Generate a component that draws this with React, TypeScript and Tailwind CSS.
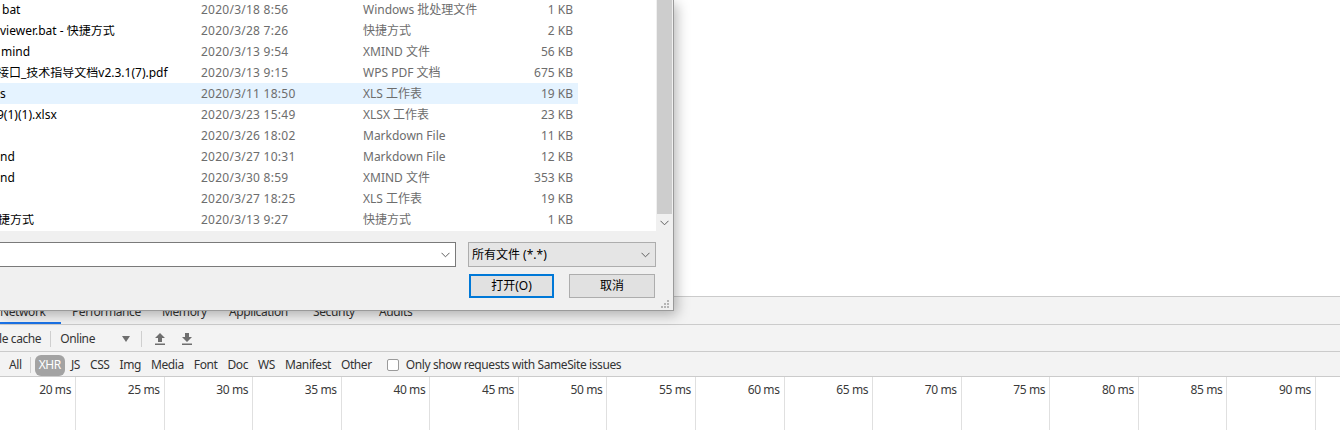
const FONT = "font-['Noto_Sans','Noto_Sans_CJK_SC',sans-serif]";

type FileRow = {
  name: string;
  off: string;
  date: string;
  type: string;
  size: string;
  selected?: boolean;
};

const FILES: FileRow[] = [
  { name: "bat", off: "ml-[2px]", date: "2020/3/18 8:56", type: "Windows 批处理文件", size: "1 KB" },
  { name: "viewer.bat - 快捷方式", off: "ml-0", date: "2020/3/28 7:26", type: "快捷方式", size: "2 KB" },
  { name: "mind", off: "ml-[1px]", date: "2020/3/13 9:54", type: "XMIND 文件", size: "56 KB" },
  { name: "接口_技术指导文档v2.3.1(7).pdf", off: "-ml-[3px]", date: "2020/3/13 9:15", type: "WPS PDF 文档", size: "675 KB" },
  { name: "s", off: "ml-0", date: "2020/3/11 18:50", type: "XLS 工作表", size: "19 KB", selected: true },
  { name: "9(1)(1).xlsx", off: "-ml-[3px]", date: "2020/3/23 15:49", type: "XLSX 工作表", size: "23 KB" },
  { name: "", off: "ml-0", date: "2020/3/26 18:02", type: "Markdown File", size: "11 KB" },
  { name: "nd", off: "ml-0", date: "2020/3/27 10:31", type: "Markdown File", size: "12 KB" },
  { name: "nd", off: "ml-0", date: "2020/3/30 8:59", type: "XMIND 文件", size: "353 KB" },
  { name: "", off: "ml-0", date: "2020/3/27 18:25", type: "XLS 工作表", size: "19 KB" },
  { name: "捷方式", off: "-ml-[2px]", date: "2020/3/13 9:27", type: "快捷方式", size: "1 KB" },
];

const TABS = [
  { label: "Network", w: "w-[72px] -ml-[11px]", active: true },
  { label: "Performance", w: "w-[90px]" },
  { label: "Memory", w: "w-[67px]" },
  { label: "Application", w: "w-[84px]" },
  { label: "Security", w: "w-[66px]" },
  { label: "Audits", w: "w-[60px]" },
];

const FILTERS = ["CSS", "Img", "Media", "Font", "Doc", "WS", "Manifest", "Other"];

const TICKS = [20, 25, 30, 35, 40, 45, 50, 55, 60, 65, 70, 75, 80, 85, 90];

export default function App() {
  return (
    <div className={`relative w-[1340px] h-[430px] overflow-hidden bg-white ${FONT}`}>
      <div className="h-[296px]" />
      <DevTools />
      <FileDialog />
    </div>
  );
}

function Chevron() {
  return (
    <svg width="9" height="6" viewBox="0 0 9 6" fill="none" aria-hidden>
      <path d="M0.5 0.8L4.5 4.8L8.5 0.8" stroke="#606060" strokeWidth="1" />
    </svg>
  );
}

function FileDialog() {
  return (
    <div className="absolute top-0 left-0 w-[674px] h-[311px] bg-[#f0f0f0] border-r border-b border-[#9a9a9a] shadow-[3px_4px_12px_rgba(0,0,0,0.28)]">
      <div className="flex h-[231px]">
        <div className="w-[656px] h-full bg-white overflow-hidden">
          <div className="-mt-px">
            {FILES.map((f, i) => (
              <div
                key={i}
                className={`flex items-center h-[21px] w-[578px] text-[12px] leading-none ${
                  f.selected ? "bg-[#e5f3ff]" : ""
                }`}
              >
                <div className="w-[201px] overflow-hidden whitespace-nowrap text-black">
                  <span className={`inline-block ${f.off}`}>{f.name}</span>
                </div>
                <div className="w-[162px] text-[#6d6d6d] tracking-[0.25px]">{f.date}</div>
                <div className="w-[130px] text-[#6d6d6d] whitespace-nowrap">{f.type}</div>
                <div className="flex-1 text-right pr-[5px] text-[#6d6d6d]">{f.size}</div>
              </div>
            ))}
          </div>
        </div>
        <div className="w-[17px] h-full bg-[#f0f0f0] px-px flex flex-col">
          <div className="h-[214px] bg-[#cdcdcd]" />
          <div className="flex-1 flex items-center justify-center">
            <Chevron />
          </div>
        </div>
      </div>

      <div className="pt-[11px]">
        <div className="flex">
          <div className="-ml-[2px] w-[458px] h-[25px] border border-[#7a7a7a] bg-white flex items-center justify-end pr-[5px]">
            <Chevron />
          </div>
          <div className="ml-[12px] w-[188px] h-[25px] border border-[#adadad] bg-[#e5e5e5] flex items-center justify-between pl-[3px] pr-[5px] text-[12px] text-black">
            <span>所有文件 (*.*)</span>
            <Chevron />
          </div>
        </div>
        <div className="mt-[7px] flex pl-[469px] text-[12px] text-black">
          <button className="w-[85px] h-[24px] border-2 border-[#0078d7] bg-[#e1e1e1] flex items-center justify-center">
            打开(O)
          </button>
          <button className="ml-[15px] w-[86px] h-[24px] border border-[#adadad] bg-[#e1e1e1] flex items-center justify-center">
            取消
          </button>
        </div>
      </div>

      <svg className="absolute right-[4px] bottom-[2px]" width="9" height="9" viewBox="0 0 9 9" aria-hidden>
        <g fill="#b5b5b5">
          <rect x="7" y="1" width="2" height="2" />
          <rect x="4" y="4" width="2" height="2" />
          <rect x="7" y="4" width="2" height="2" />
          <rect x="1" y="7" width="2" height="2" />
          <rect x="4" y="7" width="2" height="2" />
          <rect x="7" y="7" width="2" height="2" />
        </g>
      </svg>
    </div>
  );
}

function Sep() {
  return <div className="w-px h-[16px] bg-[#cfcfcf]" />;
}

function DevTools() {
  return (
    <div className="border-t border-[#cbcbcb] text-[12px] tracking-[-0.4px] text-[#333]">
      {/* tab strip */}
      <div className="h-[28px] bg-[#f3f3f3] border-b border-[#cbcbcb] flex">
        {TABS.map((t) => (
          <div
            key={t.label}
            className={`${t.w} h-full pl-[11px] pt-[7px] leading-[16px] ${
              t.active ? "border-b-2 border-[#1a73e8]" : ""
            }`}
          >
            {t.label}
          </div>
        ))}
      </div>

      {/* toolbar */}
      <div className="h-[27px] bg-[#f3f3f3] border-b border-[#cbcbcb] flex items-center pt-px">
        <span className="-ml-px">le cache</span>
        <div className="ml-[9px]">
          <Sep />
        </div>
        <span className="ml-[9px]">Online</span>
        <svg className="ml-[27px]" width="8" height="6" viewBox="0 0 8 6" aria-hidden>
          <path d="M0 0H8L4 6Z" fill="#6e6e6e" />
        </svg>
        <div className="ml-[11px]">
          <Sep />
        </div>
        <svg className="ml-[13px]" width="10" height="12" viewBox="0 0 10 12" aria-hidden>
          <path d="M5 0L10 5H7V9H3V5H0Z" fill="#6e6e6e" />
          <rect x="0" y="10.5" width="10" height="1.5" fill="#6e6e6e" />
        </svg>
        <svg className="ml-[17px]" width="10" height="12" viewBox="0 0 10 12" aria-hidden>
          <path d="M3 0H7V4H10L5 9L0 4H3Z" fill="#6e6e6e" />
          <rect x="0" y="10.5" width="10" height="1.5" fill="#6e6e6e" />
        </svg>
      </div>

      {/* filter bar */}
      <div className="h-[25px] bg-[#f3f3f3] border-b border-[#cbcbcb] flex items-center pt-[2px]">
        <span className="ml-[9px]">All</span>
        <div className="ml-[8px]">
          <Sep />
        </div>
        <span className="ml-[4px] h-[21px] px-[4px] rounded-[6px] bg-[#a3a3a3] text-white flex items-center">
          XHR
        </span>
        <span className="ml-[6px]">JS</span>
        {FILTERS.map((f) => (
          <span key={f} className="ml-[10px]">
            {f}
          </span>
        ))}
        <span className="ml-[15px] w-[12px] h-[12px] rounded-[2px] border border-[#9a9a9a] bg-white" />
        <span className="ml-[7px]">Only show requests with SameSite issues</span>
      </div>

      {/* timeline ruler */}
      <div className="h-[53px] bg-white flex -ml-[12.571px]">
        {TICKS.map((t) => (
          <div
            key={t}
            className="shrink-0 w-[88.571px] h-full border-r border-[#e0e0e0] text-right pr-[4px] pt-[5px] leading-[16px] text-[#3a3a3a]"
          >
            {t} ms
          </div>
        ))}
        <div className="flex-1" />
      </div>
    </div>
  );
}
